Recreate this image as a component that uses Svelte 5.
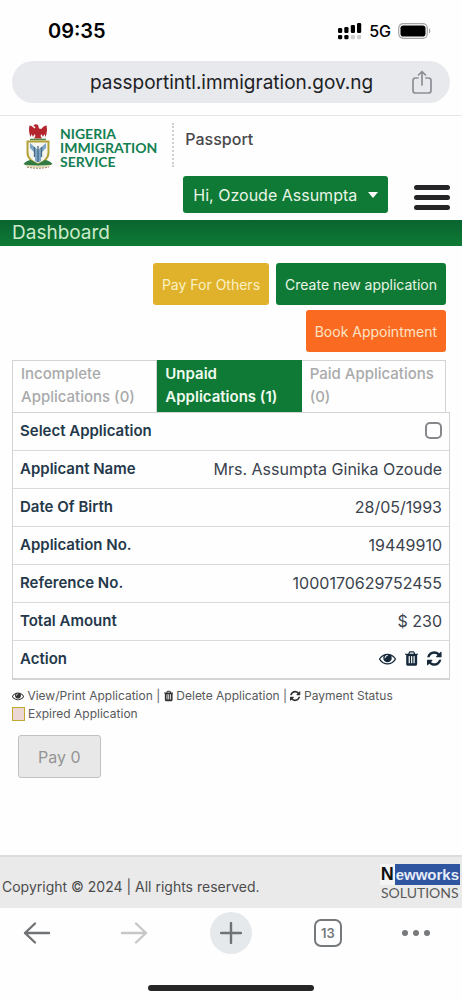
<script>
  let activeTab = $state('unpaid');
  let selected = $state(false);

  const tabs = [
    { id: 'incomplete', label: 'Incomplete Applications (0)' },
    { id: 'unpaid', label: 'Unpaid Applications (1)' },
    { id: 'paid', label: 'Paid Applications (0)' }
  ];

  const details = [
    { label: 'Applicant Name', value: 'Mrs. Assumpta Ginika Ozoude' },
    { label: 'Date Of Birth', value: '28/05/1993' },
    { label: 'Application No.', value: '19449910' },
    { label: 'Reference No.', value: '1000170629752455' },
    { label: 'Total Amount', value: '$ 230' }
  ];

  // icon boxes are cropped to the glyph's own width
  const icons = {
    eye: {
      box: '0 0 1792 1792',
      path: 'M1664 960q-152-236-381-353 61 104 61 225 0 185-131.5 316.5t-316.5 131.5-316.5-131.5-131.5-316.5q0-121 61-225-229 117-381 353 133 205 333.5 326.5t434.5 121.5 434.5-121.5 333.5-326.5zm-720-384q0-20-14-34t-34-14q-125 0-214.5 89.5t-89.5 214.5q0 20 14 34t34 14 34-14 14-34q0-86 61-147t147-61q20 0 34-14t14-34zm848 384q0 34-20 69-140 230-376.5 368.5t-499.5 138.5-499.5-139-376.5-368q-20-35-20-69t20-69q140-229 376.5-368t499.5-139 499.5 139 376.5 368q20 35 20 69z'
    },
    trash: {
      box: '192 0 1408 1792',
      path: 'M704 1376v-704q0-14-9-23t-23-9h-64q-14 0-23 9t-9 23v704q0 14 9 23t23 9h64q14 0 23-9t9-23zm256 0v-704q0-14-9-23t-23-9h-64q-14 0-23 9t-9 23v704q0 14 9 23t23 9h64q14 0 23-9t9-23zm256 0v-704q0-14-9-23t-23-9h-64q-14 0-23 9t-9 23v704q0 14 9 23t23 9h64q14 0 23-9t9-23zm-544-992h448l-48-117q-7-9-17-11h-317q-10 2-17 11zm928 32v64q0 14-9 23t-23 9h-96v948q0 83-47 143.5t-113 60.5h-832q-66 0-113-58.5t-47-141.5v-952h-96q-14 0-23-9t-9-23v-64q0-14 9-23t23-9h309l70-167q15-37 54-63t79-26h320q40 0 79 26t54 63l70 167h309q14 0 23 9t9 23z'
    },
    refresh: {
      box: '128 0 1536 1792',
      path: 'M1639 1056q0 5-1 7-64 268-268 434.5t-478 166.5q-146 0-282.5-55t-243.5-157l-129 129q-19 19-45 19t-45-19-19-45v-448q0-26 19-45t45-19h448q26 0 45 19t19 45-19 45l-137 137q71 66 161 102t187 36q134 0 250-65t186-179q11-17 53-117 8-23 30-23h192q13 0 22.5 9.5t9.5 22.5zm25-800v448q0 26-19 45t-45 19h-448q-26 0-45-19t-19-45 19-45l138-138q-148-137-349-137-134 0-250 65t-186 179q-11 17-53 117-8 23-30 23h-199q-13 0-22.5-9.5t-9.5-22.5v-7q65-268 270-434.5t480-166.5q146 0 284 55.5t245 156.5l130-129q19-19 45-19t45 19 19 45z'
    }
  };
</script>

{#snippet icon(name)}
  <svg class="icon" viewBox={icons[name].box} aria-hidden="true"><path d={icons[name].path} /></svg>
{/snippet}

<div class="phone">
  <div class="status-bar">
    <span class="time">09:35</span>
    <div class="status-right">
      <svg width="24" height="18" viewBox="0 0 24 18" aria-hidden="true">
        <g fill="#000">
          <rect x="0" y="6" width="4.200" height="5" rx="1.300" />
          <rect x="6.300" y="5" width="4.200" height="6" rx="1.300" />
          <rect x="12.800" y="3" width="4.200" height="8" rx="1.300" />
          <rect x="19" y="1" width="4.200" height="10" rx="1.300" />
          <rect x="0" y="13" width="4.200" height="4.200" rx="1.300" />
          <rect x="6.300" y="13" width="4.200" height="4.200" rx="1.300" />
        </g>
        <g fill="#d0d0d0">
          <rect x="12.800" y="13" width="4.200" height="4.200" rx="1.300" />
          <rect x="19" y="13" width="4.200" height="4.200" rx="1.300" />
        </g>
      </svg>
      <span class="network">5G</span>
      <svg width="33" height="16" viewBox="0 0 33 16" aria-hidden="true">
        <rect x="0.7" y="0.7" width="28.6" height="14.6" rx="4.5" fill="none" stroke="#a4a4a4" stroke-width="1.2" />
        <rect x="2.5" y="2.5" width="25" height="11" rx="2.8" />
        <path d="M31 5.5c1.800 .6 1.800 4.400 0 5z" fill="#a4a4a4" />
      </svg>
    </div>
  </div>

  <div class="address-bar">
    <span class="url">passportintl.immigration.gov.ng</span>
    <button class="plain share" aria-label="Share">
      <svg width="20" height="24" viewBox="0 0 20 24" fill="none" stroke="#8b8f95" stroke-width="1.7" stroke-linecap="round" stroke-linejoin="round">
        <path d="M6 8H3.500Q1 8 1 10.500V20.500Q1 23 3.500 23H16.500Q19 23 19 20.500V10.500Q19 8 16.500 8H14M10 15V1.500M6.500 5 10 1.500 13.500 5" />
      </svg>
    </button>
  </div>

  <header class="site-header">
    <div class="brand">
      <svg width="32" height="46" viewBox="0 0 32 46" aria-hidden="true">
        <path d="M16 2c-1.500-1.500-4-1-4.500 1l2 1-.8 1.500C11 4 9.500 2.500 7.500 2.500 6.500 6 7 10 8.500 14l1.200-3 1.300 3 1.500-3 1 2-1.500 2.500h8L18.500 13l1-2 1.500 3 1.300-3 1.200 3c1.500-4 2-8 1-11.500-2 0-3.500 1.500-5.200 3.500L17 5.500z" fill="#b3262d" />
        <path d="M8 16.500h16" stroke="#4f8a45" stroke-width="1.600" />
        <path d="M5.500 18.500h21v11c0 6-4.500 9-10.500 12-6-3-10.500-6-10.500-12z" fill="#f5f5ef" stroke="#b3a239" stroke-width="2" />
        <path d="M8 20 16 27l8-7v5L19 30v8l-3 1.500-3-1.500v-8l-5-5z" fill="#7fa6c6" />
        <path d="M16 23v16M12.500 24v10M19.500 24v10" stroke="#466a86" stroke-width="1.300" />
        <path d="M1.500 41c3-3 5-4 7.500-4l7 4 7-4c2.500 0 4.500 1 7.500 4l-3 1.500h-23z" fill="#317b43" />
        <path d="M4 42.500q12 3 24 0" fill="none" stroke="#e2dcb5" stroke-width="1.800" />
        <path d="M5 44q11 2.500 22 0" fill="none" stroke="#9d785f" stroke-width="1" stroke-dasharray="2 1" />
      </svg>
      <div class="brand-name">
        <div>NIGERIA</div>
        <div>IMMIGRATION</div>
        <div>SERVICE</div>
      </div>
    </div>
    <div class="header-right">
      <div class="product">Passport</div>
      <div class="user-row">
        <button class="btn user">Hi, Ozoude Assumpta <span class="caret"></span></button>
        <button class="plain menu" aria-label="Menu"><i></i><i></i><i></i></button>
      </div>
    </div>
  </header>

  <h1>Dashboard</h1>

  <main>
    <div class="actions">
      <button class="btn others">Pay For Others</button>
      <button class="btn create">Create new application</button>
      <button class="btn book">Book Appointment</button>
    </div>

    <div class="tabs" role="tablist">
      {#each tabs as tab}
        <button
          class="tab"
          class:active={activeTab === tab.id}
          role="tab"
          aria-selected={activeTab === tab.id}
          onclick={() => (activeTab = tab.id)}
        >{tab.label}</button>
      {/each}
    </div>

    <table>
      <tbody>
        <tr>
          <th scope="row"><label for="select-app">Select Application</label></th>
          <td><input id="select-app" type="checkbox" bind:checked={selected} /></td>
        </tr>
        {#each details as row}
          <tr>
            <th scope="row">{row.label}</th>
            <td>{row.value}</td>
          </tr>
        {/each}
        <tr>
          <th scope="row">Action</th>
          <td>
            <div class="row-actions">
              <button class="plain" aria-label="View/Print Application">{@render icon('eye')}</button>
              <button class="plain" aria-label="Delete Application">{@render icon('trash')}</button>
              <button class="plain" aria-label="Payment Status">{@render icon('refresh')}</button>
            </div>
          </td>
        </tr>
      </tbody>
    </table>

    <div class="legend">
      <div>{@render icon('eye')} View/Print Application | {@render icon('trash')} Delete Application | {@render icon('refresh')} Payment Status</div>
      <div class="expired"><span class="swatch"></span>Expired Application</div>
    </div>

    <button class="pay" disabled={!selected}>Pay 0</button>
  </main>

  <footer>
    <span>Copyright © 2024 | All rights reserved.</span>
    <div class="vendor">
      <div class="vendor-top"><b>N</b><span>ewworks</span></div>
      <div class="vendor-bottom">SOLUTIONS</div>
    </div>
  </footer>

  <nav class="toolbar">
    <button class="plain" aria-label="Back">
      <svg width="28" height="24" viewBox="0 0 28 24" fill="none" stroke="#6f7376" stroke-width="2.400" stroke-linecap="round" stroke-linejoin="round"><path d="M26 12H2M12 2.500 2 12l10 9.500" /></svg>
    </button>
    <button class="plain" aria-label="Forward">
      <svg width="28" height="24" viewBox="0 0 28 24" fill="none" stroke="#c6c7c8" stroke-width="2.400" stroke-linecap="round" stroke-linejoin="round"><path d="M2 12h24M16 2.500 26 12l-10 9.500" /></svg>
    </button>
    <button class="plain new-tab" aria-label="New tab">
      <svg width="22" height="22" viewBox="0 0 22 22" stroke="#6f7376" stroke-width="2.400" stroke-linecap="round"><path d="M11 1v20M1 11h20" /></svg>
    </button>
    <button class="plain" aria-label="Open tabs"><span class="tab-count">13</span></button>
    <button class="plain more" aria-label="More">
      <svg width="28" height="8" viewBox="0 0 28 8" fill="#77797b"><circle cx="3" cy="4" r="3" /><circle cx="14" cy="4" r="3" /><circle cx="25" cy="4" r="3" /></svg>
    </button>
  </nav>
  <div class="home-bar"></div>
</div>

<style>
  :global(body) {
    margin: 0;
    background: #fefefe;
  }
  .phone {
    min-height: 100vh;
    display: flex;
    flex-direction: column;
    font-family: Inter, 'Liberation Sans', sans-serif;
    color: #4a4c50;
  }
  button {
    font-family: inherit;
    cursor: pointer;
  }
  .plain {
    display: flex;
    align-items: center;
    justify-content: center;
    padding: 0;
    border: none;
    background: none;
    color: inherit;
  }
  .plain svg {
    flex: none;
  }
  .icon {
    height: 1em;
    fill: currentColor;
  }

  /* browser chrome, top */
  .status-bar {
    height: 61px;
    padding: 0 31px 0 48px;
    display: flex;
    align-items: center;
    justify-content: space-between;
    color: #000;
  }
  .time {
    font-size: 20px;
    font-weight: 600;
  }
  .status-right {
    display: flex;
    align-items: center;
    gap: 7px;
  }
  .network {
    font-size: 16px;
    font-weight: 500;
  }
  .address-bar {
    height: 42px;
    margin: 0 12px 12px;
    padding: 0 18px 0 78px;
    border-radius: 21px;
    background: #e8e9ed;
    display: flex;
    align-items: center;
    justify-content: space-between;
    color: #202124;
  }
  .url {
    font-size: 19px;
  }

  /* site header */
  .site-header {
    border-top: 1px solid #e6e6e6;
    padding: 7px 12px 7px 22px;
    display: flex;
    gap: 15px;
  }
  .brand {
    display: flex;
    gap: 6px;
    align-self: flex-start;
  }
  .brand-name {
    padding-top: 4px;
    font-family: Lato, sans-serif;
    font-size: 14px;
    font-weight: 700;
    line-height: 14px;
    color: #148052;
  }
  .header-right {
    flex: 1;
  }
  .product {
    height: 44px;
    padding-left: 11px;
    border-left: 2px dotted #cfcfcf;
    font-size: 16px;
    font-weight: 500;
    line-height: 32px;
    color: #48484a;
  }
  .user-row {
    margin: 9px 0 0 11px;
    display: flex;
    align-items: flex-end;
    justify-content: space-between;
  }
  .btn {
    border: none;
    border-radius: 3px;
    color: #e9f5e6;
  }
  .user {
    height: 37px;
    padding: 0 10px;
    display: flex;
    align-items: center;
    gap: 11px;
    background: #0e7a35;
    font-size: 16px;
  }
  .caret {
    border: 5px solid transparent;
    border-top: 6px solid #fff;
    border-bottom: none;
  }
  .menu {
    width: 36px;
    padding-bottom: 3px;
    flex-direction: column;
    gap: 5px;
  }
  .menu i {
    width: 100%;
    height: 5px;
    border-radius: 3px;
    background: #252527;
  }
  h1 {
    margin: 0;
    padding-left: 12px;
    background: linear-gradient(#0a6530, #0e7a35);
    color: #cdeacb;
    font-size: 19px;
    font-weight: 400;
    line-height: 26px;
  }

  main {
    padding: 17px 12px 0;
    flex: 1;
  }
  .actions {
    display: flex;
    flex-wrap: wrap;
    justify-content: flex-end;
    gap: 5px 7px;
    margin-right: 4px;
  }
  .actions .btn {
    height: 42px;
    padding: 0 9px;
    font-size: 14px;
  }
  .others { background: #e0b22b; }
  .create { background: #0e7a35; }
  .actions .book { background: #fb6a21; color: #fde3c4; }
  .actions .others { color: #fbf0c4; }

  .tabs {
    display: flex;
    margin: 8px 4px 0 0;
  }
  .tab {
    flex: 1;
    height: 52px;
    padding: 1px 8px 4px;
    border: 1px solid #d2d3d4;
    border-width: 1px 1px 0 0;
    background: none;
    color: #a9aaab;
    font-size: 15px;
    font-weight: 500;
    line-height: 23px;
    text-align: left;
  }
  .tab:first-child {
    border-left-width: 1px;
  }
  .tab.active {
    border-color: #0e7a35;
    background: #0e7a35;
    color: #f0fbf0;
    font-weight: 600;
  }

  table {
    width: 100%;
    border: 1px solid #d2d3d4;
    border-bottom-width: 2px;
    border-spacing: 0;
  }
  th, td {
    height: 35px;
    padding: 0 7px 2px;
    border-bottom: 1px solid #d9dadb;
    color: #24384a;
  }
  tr:last-child > * {
    border-bottom: none;
  }
  th {
    font-size: 15px;
    font-weight: 600;
    text-align: left;
    white-space: nowrap;
  }
  td {
    font-size: 16px;
    text-align: right;
    color: #3a434d;
  }
  td input {
    appearance: none;
    display: block;
    width: 17px;
    height: 17px;
    margin: 0 0 0 auto;
    border: 2px solid #85878a;
    border-radius: 5px;
    background: #fff;
  }
  td input:checked {
    background: #0e7a35;
  }
  .row-actions {
    display: flex;
    justify-content: flex-end;
    gap: 9px;
    font-size: 17px;
    color: #16293b;
  }
  .row-actions .plain {
    font-size: inherit;
  }

  .legend {
    padding-top: 7px;
    font-size: 12px;
    line-height: 18px;
    color: #58595b;
  }
  .legend .icon {
    color: #333;
    vertical-align: -2px;
  }
  .expired {
    display: flex;
    align-items: center;
    gap: 3px;
  }
  .swatch {
    width: 11px;
    height: 12px;
    border: 1px solid #c1a92e;
    background: #ecd7d5;
  }
  .pay {
    height: 43px;
    margin: 12px 6px;
    padding: 0 19px;
    border: 1px solid #c1c1c1;
    border-radius: 3px;
    background: #e8e8e8;
    color: #949494;
    font-size: 16px;
  }

  footer {
    height: 51px;
    padding: 0 2px;
    border-top: 2px solid #dcdcdc;
    background: #eaeaea;
    display: flex;
    align-items: center;
    justify-content: space-between;
    font-size: 14px;
    color: #4c4c4d;
  }
  footer > span {
    padding-top: 8px;
  }
  .vendor-top {
    display: flex;
    font-family: 'Liberation Sans', Arial, sans-serif;
    font-weight: 700;
    line-height: 21px;
  }
  .vendor-top b {
    padding: 0 1px;
    background: #f4f4f4;
    font-size: 18px;
    color: #111;
  }
  .vendor-top span {
    flex: 1;
    padding: 0 1px;
    background: #2f54a0;
    color: #e6ecf8;
    font-size: 15px;
  }
  .vendor-bottom {
    font-family: Lato, sans-serif;
    font-size: 14px;
    line-height: 16px;
    text-align: center;
    color: #5a5a5a;
  }

  /* browser chrome, bottom */
  .toolbar {
    padding: 4px 34px 0 16px;
    display: flex;
    align-items: center;
    justify-content: space-between;
  }
  .toolbar .plain {
    width: 42px;
    height: 42px;
  }
  .toolbar .more {
    width: 24px;
  }
  .toolbar .new-tab {
    border-radius: 50%;
    background: #e6e9eb;
  }
  .tab-count {
    width: 24px;
    height: 24px;
    border: 2px solid #75797b;
    border-radius: 7px;
    color: #75797b;
    font-size: 13px;
    font-weight: 600;
    line-height: 24px;
  }
  .home-bar {
    width: 36%;
    height: 6px;
    margin: 31px auto 9px;
    border-radius: 3px;
    background: #262626;
  }
</style>
